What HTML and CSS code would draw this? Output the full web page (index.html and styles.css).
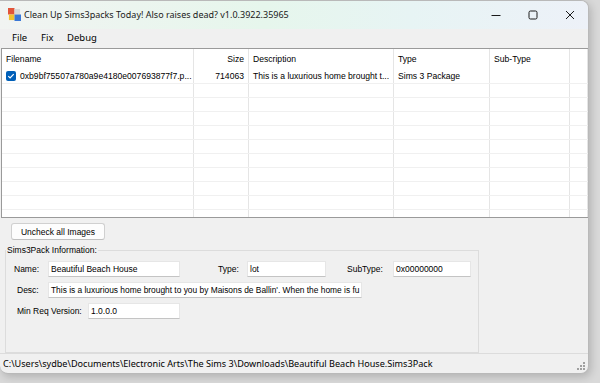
FILE: index.html
```html
<!DOCTYPE html>
<html lang="en">
<head>
  <meta charset="UTF-8">
  <title>Clean Up Sims3packs Today!</title>
  <link rel="stylesheet" href="styles.css">
</head>
<body>
  <div class="window">
    <div class="titlebar">
      <svg class="app-icon" width="13" height="13" viewBox="0 0 14 14">
        <rect x="0" y="0" width="7" height="7" fill="#e2553a"/>
        <rect x="7" y="1" width="6" height="6" fill="#d8d8d8"/>
        <rect x="1" y="7" width="6" height="6" fill="#f2c230"/>
        <rect x="7" y="7" width="7" height="7" fill="#3a78d6"/>
      </svg>
      <span class="title">Clean Up Sims3packs Today! Also raises dead? v1.0.3922.35965</span>
      <div class="controls">
        <div class="ctl">
          <svg width="10" height="10" viewBox="0 0 10 10"><path d="M0.5 5.5h9" stroke="#1a1a1a" stroke-width="1"/></svg>
        </div>
        <div class="ctl">
          <svg width="10" height="10" viewBox="0 0 10 10"><rect x="1" y="1" width="8" height="8" rx="1.5" fill="none" stroke="#1a1a1a" stroke-width="1"/></svg>
        </div>
        <div class="ctl">
          <svg width="10" height="10" viewBox="0 0 10 10"><path d="M1 1l8 8M9 1l-8 8" stroke="#1a1a1a" stroke-width="1"/></svg>
        </div>
      </div>
    </div>

    <div class="menubar">
      <span class="menu-item m-file">File</span>
      <span class="menu-item m-fix">Fix</span>
      <span class="menu-item">Debug</span>
    </div>

    <div class="listview">
      <div class="row head">
        <div class="cell">Filename</div>
        <div class="cell right">Size</div>
        <div class="cell">Description</div>
        <div class="cell">Type</div>
        <div class="cell">Sub-Type</div>
        <div class="cell"></div>
      </div>
      <div class="row">
        <div class="cell"><span class="check"><svg width="8" height="8" viewBox="0 0 8 8"><path d="M1.3 4.2l1.8 1.8 3.6-3.8" fill="none" stroke="#fff" stroke-width="1.2"/></svg></span>0xb9bf75507a780a9e4180e007693877f7.p...</div>
        <div class="cell right">714063</div>
        <div class="cell">This is a luxurious home brought t...</div>
        <div class="cell">Sims 3 Package</div>
        <div class="cell"></div>
        <div class="cell"></div>
      </div>
      <div class="row"><div class="cell"></div><div class="cell"></div><div class="cell"></div><div class="cell"></div><div class="cell"></div><div class="cell"></div></div>
      <div class="row"><div class="cell"></div><div class="cell"></div><div class="cell"></div><div class="cell"></div><div class="cell"></div><div class="cell"></div></div>
      <div class="row"><div class="cell"></div><div class="cell"></div><div class="cell"></div><div class="cell"></div><div class="cell"></div><div class="cell"></div></div>
      <div class="row"><div class="cell"></div><div class="cell"></div><div class="cell"></div><div class="cell"></div><div class="cell"></div><div class="cell"></div></div>
      <div class="row"><div class="cell"></div><div class="cell"></div><div class="cell"></div><div class="cell"></div><div class="cell"></div><div class="cell"></div></div>
      <div class="row"><div class="cell"></div><div class="cell"></div><div class="cell"></div><div class="cell"></div><div class="cell"></div><div class="cell"></div></div>
      <div class="row"><div class="cell"></div><div class="cell"></div><div class="cell"></div><div class="cell"></div><div class="cell"></div><div class="cell"></div></div>
      <div class="row"><div class="cell"></div><div class="cell"></div><div class="cell"></div><div class="cell"></div><div class="cell"></div><div class="cell"></div></div>
      <div class="row"><div class="cell"></div><div class="cell"></div><div class="cell"></div><div class="cell"></div><div class="cell"></div><div class="cell"></div></div>
      <div class="row"><div class="cell"></div><div class="cell"></div><div class="cell"></div><div class="cell"></div><div class="cell"></div><div class="cell"></div></div>
    </div>

    <div class="lower">
      <button class="btn">Uncheck all Images</button>
      <fieldset class="group">
        <legend>Sims3Pack Information:</legend>
        <div class="field-row">
          <label class="lbl lbl-name">Name:</label>
          <span class="input w-name">Beautiful Beach House</span>
          <label class="lbl lbl-type">Type:</label>
          <span class="input w-type">lot</span>
          <label class="lbl lbl-sub">SubType:</label>
          <span class="input w-sub">0x00000000</span>
        </div>
        <div class="field-row">
          <label class="lbl lbl-desc">Desc:</label>
          <span class="input w-desc">This is a luxurious home brought to you by Maisons de Ballin'. When the home is fu</span>
        </div>
        <div class="field-row">
          <label class="lbl lbl-min">Min Req Version:</label>
          <span class="input w-min">1.0.0.0</span>
        </div>
      </fieldset>
    </div>

    <div class="statusbar">
      <span>C:\Users\sydbe\Documents\Electronic Arts\The Sims 3\Downloads\Beautiful Beach House.Sims3Pack</span>
      <svg class="grip" width="10" height="10" viewBox="0 0 10 10">
        <rect x="7" y="1" width="2" height="2" fill="#a0a0a0"/>
        <rect x="4" y="4" width="2" height="2" fill="#a0a0a0"/>
        <rect x="7" y="4" width="2" height="2" fill="#a0a0a0"/>
        <rect x="1" y="7" width="2" height="2" fill="#a0a0a0"/>
        <rect x="4" y="7" width="2" height="2" fill="#a0a0a0"/>
        <rect x="7" y="7" width="2" height="2" fill="#a0a0a0"/>
      </svg>
    </div>
  </div>
</body>
</html>
```

FILE: styles.css
```css
* {
  margin: 0;
  padding: 0;
  box-sizing: border-box;
}

body {
  background: #d9d9d9;
  width: 600px;
  height: 383px;
  overflow: hidden;
  font-family: 'Noto Sans', sans-serif;
  color: #000;
}

.window {
  width: 589px;
  height: 374px;
  background: #f0f0f0;
  border: 1px solid #b9b9b9;
  border-left: none;
  border-radius: 0 8px 8px 8px;
  box-shadow: 2px 3px 8px rgba(0, 0, 0, 0.18);
  display: flex;
  flex-direction: column;
  overflow: hidden;
}

/* Title bar */
.titlebar {
  height: 28px;
  display: flex;
  align-items: center;
  background: linear-gradient(to right, #f1f4f2 0%, #e6f6ec 45%, #e7f4f4 70%, #edf1f8 100%);
}

.app-icon {
  margin-left: 8px;
  margin-right: 3px;
}

.title {
  font-size: 9px;
  color: #1a1a1a;
  flex: 1;
}

.controls {
  display: flex;
  height: 100%;
}

.ctl {
  width: 37px;
  height: 100%;
  display: flex;
  align-items: center;
  justify-content: center;
}

/* Menu */
.menubar {
  height: 17px;
  display: flex;
  align-items: center;
  padding-left: 12px;
  font-size: 9.5px;
  background: #f0f0f0;
}

.m-file {
  width: 29px;
}

.m-fix {
  width: 26px;
}

/* List view */
.listview {
  margin: 2px 0 0 1px;
  height: 171px;
  background: #fff;
  border: 1px solid #9a9a9a;
  border-right: none;
  overflow: hidden;
  font-family: 'Liberation Sans', Arial, sans-serif;
  font-size: 8.6px;
}

.row {
  display: grid;
  grid-template-columns: 192px 55px 145px 96px 80px 1fr;
  height: 14px;
  border-bottom: 1px solid #f0f0f0;
}

.row.head {
  height: 21px;
  border-bottom: none;
}

.cell {
  border-right: 1px solid #e5e5e5;
  padding: 0 4px;
  white-space: nowrap;
  overflow: hidden;
  display: flex;
  align-items: center;
}

.cell.right {
  justify-content: flex-end;
}

.check {
  width: 10px;
  height: 10px;
  background: #005fb8;
  border-radius: 2px;
  margin-right: 4px;
  display: inline-flex;
  align-items: center;
  justify-content: center;
  flex-shrink: 0;
}

/* Lower panel */
.lower {
  flex: 1;
  padding: 5px 0 0 5px;
  font-family: 'Liberation Sans', Arial, sans-serif;
  font-size: 8.5px;
}

.btn {
  display: block;
  margin-left: 6px;
  width: 94px;
  height: 17px;
  background: #fdfdfd;
  border: 1px solid #d0d0d0;
  border-bottom-color: #c0c0c0;
  border-radius: 3px;
  font-family: inherit;
  font-size: 8.5px;
  color: #000;
}

.group {
  width: 474px;
  height: 108px;
  margin-top: 5px;
  border: 1px solid #dcdcdc;
  padding: 6px 0 0 0;
}

.group legend {
  padding: 0 1px;
}

.field-row {
  display: flex;
  align-items: center;
  height: 16px;
  margin-bottom: 5px;
}

.lbl {
  flex-shrink: 0;
}

.input {
  height: 16px;
  background: #fff;
  border: 1px solid #e6e6e6;
  border-bottom-color: #c4c4c4;
  padding: 0 2px;
  white-space: nowrap;
  overflow: hidden;
  line-height: 14px;
  flex-shrink: 0;
}

.w-desc {
  font-size: 8.4px;
}

.lbl-name { margin-left: 8px; width: 34px; }
.w-name { width: 132px; }
.lbl-type { margin-left: 38px; width: 29px; }
.w-type { width: 79px; }
.lbl-sub { margin-left: 21px; width: 46px; }
.w-sub { width: 78px; }
.lbl-desc { margin-left: 11px; width: 31px; }
.w-desc { width: 314px; }
.lbl-min { margin-left: 11px; width: 71px; }
.w-min { width: 92px; }

/* Status bar */
.statusbar {
  height: 20px;
  border-top: 1px solid #dcdcdc;
  display: flex;
  align-items: center;
  justify-content: space-between;
  padding: 0 2px 0 3px;
  font-size: 9.1px;
}

.grip {
  align-self: flex-end;
  margin-bottom: 2px;
}
```
